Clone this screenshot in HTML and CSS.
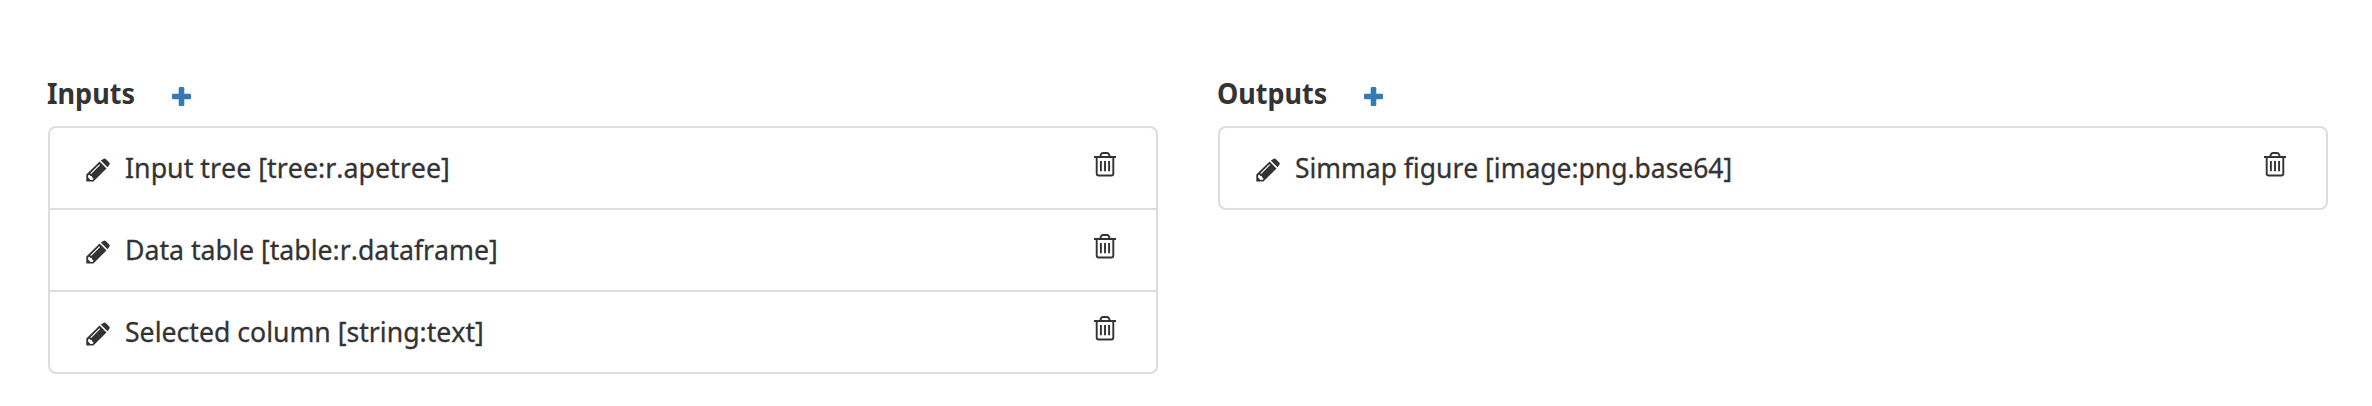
FILE: index.html
```html
<!DOCTYPE html>
<html lang="en">
<head>
<meta charset="utf-8">
<title>Inputs and Outputs</title>
<link rel="stylesheet" href="styles.css">
</head>
<body>
<svg class="sprite" aria-hidden="true">
  <symbol id="plus" viewBox="0 0 19 19"><path d="M8 0h3a1.3 1.3 0 0 1 1.300 1.300V6.700H17.700A1.300 1.300 0 0 1 19 8v3a1.300 1.300 0 0 1-1.300 1.300H12.300V17.700A1.300 1.300 0 0 1 11 19H8a1.300 1.300 0 0 1-1.300-1.300V12.300H1.300A1.300 1.300 0 0 1 0 11V8a1.300 1.300 0 0 1 1.300-1.300H6.700V1.300A1.300 1.300 0 0 1 8 0z"/></symbol>
  <symbol id="pencil" viewBox="0 0 24 24"><path fill-rule="evenodd" d="M17 1.200Q18.500-.3 20 1.200L23 4.200Q24.500 5.700 23 7.200L21.500 9.300 14.800 2.600zM13.600 3.600L20.500 10.400 7.400 23.600H.3V16.500zM13.300 6.300L4.300 15.200 5.100 16 14.100 7.100zM2.100 17.600V19.500L4.500 21.900H6.500L7.600 20.600 6.200 19.600 5.700 18 4 17.700 3.300 16.400z"/></symbol>
  <symbol id="trash" viewBox="0 0 22 25"><g fill="none" stroke="currentColor" stroke-width="1.900"><path d="M0 5H22M6 5L7 2.300Q7.500 1 9 1H13Q14.500 1 15 2.300L16 5M2.700 5V21.500Q2.700 23.500 4.700 23.500H17.300Q19.300 23.500 19.300 21.500V5M6.900 9V19.300M11 9V19.300M15.100 9V19.300"/></g></symbol>
</svg>
<main class="io">
  <section class="panel">
    <header class="panel-head"><h2 class="title title-inputs"><span class="fit">Inputs</span></h2><svg class="plus"><use href="#plus"/></svg></header>
    <ul class="list">
      <li class="item"><svg class="pencil"><use href="#pencil"/></svg><span class="label label-tree">Input tree [tree:r.apetree]</span><svg class="trash"><use href="#trash"/></svg></li>
      <li class="item"><svg class="pencil"><use href="#pencil"/></svg><span class="label label-table">Data table [table:r.dataframe]</span><svg class="trash"><use href="#trash"/></svg></li>
      <li class="item"><svg class="pencil"><use href="#pencil"/></svg><span class="label label-column">Selected column [string:text]</span><svg class="trash"><use href="#trash"/></svg></li>
    </ul>
  </section>
  <section class="panel">
    <header class="panel-head"><h2 class="title title-outputs"><span class="fit">Outputs</span></h2><svg class="plus"><use href="#plus"/></svg></header>
    <ul class="list">
      <li class="item"><svg class="pencil"><use href="#pencil"/></svg><span class="label label-figure">Simmap figure [image:png.base64]</span><svg class="trash"><use href="#trash"/></svg></li>
    </ul>
  </section>
</main>
</body>
</html>
```
FILE: styles.css
```css
* { box-sizing: border-box; }
body { margin: 0; background: #fff; color: #333; font: 28px/40px "Noto Sans", "Open Sans", sans-serif; font-kerning: none; }
.sprite { display: none; }
.io { display: grid; grid-template-columns: 1110px 1110px; column-gap: 60px; align-items: start; padding: 73px 44px 0 48px; }
.panel-head { display: flex; align-items: flex-start; height: 53px; }
.title { flex: none; margin: 0; font-size: 28px; line-height: 40px; font-weight: 700; white-space: nowrap; }
.title-inputs { width: 124px; }
.title-outputs { width: 146px; }
.fit { display: inline-block; margin-left: -1px; transform: scaleX(.965); transform-origin: 0 0; }
.title-outputs .fit { transform: scaleX(.962); }
.plus { width: 19px; height: 19px; margin-top: 14px; fill: #337ab7; }
.list { list-style: none; margin: 0; padding: 0; border: 2px solid #ddd; border-radius: 8px; }
.item { display: flex; align-items: flex-start; height: 80px; padding: 0 40px 0 36px; }
.item + .item { height: 82px; border-top: 2px solid #ddd; }
.pencil { flex: none; width: 24px; height: 24px; margin: 30px 15px 0 0; fill: #333; }
.label { padding-top: 19px; white-space: nowrap; -webkit-text-stroke: .3px #333; transform-origin: 0 0; }
.label-tree { transform: scaleX(.957); }
.label-table { transform: scaleX(.953); }
.label-column { transform: scaleX(.951); }
.label-figure { transform: scaleX(.945); }
.trash { flex: none; width: 22px; height: 25px; margin: 24px 0 0 auto; color: #333; }
```
